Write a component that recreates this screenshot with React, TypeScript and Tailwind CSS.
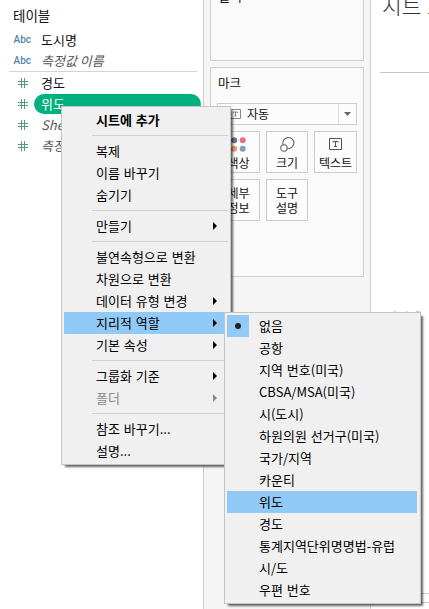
import type { ReactNode } from "react";

type Item = { label: string; arrow?: boolean; bold?: boolean; disabled?: boolean; active?: boolean; checked?: boolean } | null;

const contextMenu: Item[] = [
  { label: "시트에 추가", bold: true },
  null,
  { label: "복제" },
  { label: "이름 바꾸기" },
  { label: "숨기기" },
  null,
  { label: "만들기", arrow: true },
  null,
  { label: "불연속형으로 변환" },
  { label: "차원으로 변환" },
  { label: "데이터 유형 변경", arrow: true },
  { label: "지리적 역할", arrow: true, active: true },
  { label: "기본 속성", arrow: true },
  null,
  { label: "그룹화 기준", arrow: true },
  { label: "폴더", arrow: true, disabled: true },
  null,
  { label: "참조 바꾸기..." },
  { label: "설명..." },
];

const roleMenu: Item[] = [
  { label: "없음", checked: true },
  { label: "공항" },
  { label: "지역 번호(미국)" },
  { label: "CBSA/MSA(미국)" },
  { label: "시(도시)" },
  { label: "하원의원 선거구(미국)" },
  { label: "국가/지역" },
  { label: "카운티" },
  { label: "위도", active: true },
  { label: "경도" },
  { label: "통계지역단위명명법-유럽" },
  { label: "시/도" },
  { label: "우편 번호" },
];

function Menu({ items, className }: { items: Item[]; className: string }) {
  return (
    <div className={`absolute border border-[#c4c4c4] bg-[#f0f0f0] py-[2px] pl-[2px] text-[13px] text-black shadow-[3px_3px_2px_-1px_rgba(0,0,0,0.6)] [word-spacing:1px] ${className}`}>
      {items.map((item, i) =>
        item === null ? (
          <div key={i} className="flex h-[9px] items-center pl-7">
            <div className="h-px w-full bg-[#d2d2d2]" />
          </div>
        ) : (
          <div
            key={i}
            className={`flex h-[22px] items-center whitespace-nowrap ${item.active ? "bg-[#91c9f7]" : ""} ${item.disabled ? "text-[#8a8a8a]" : ""} ${item.bold ? "font-bold" : ""}`}
          >
            <div className={`mr-[10px] flex size-[22px] shrink-0 items-center justify-center ${item.checked ? "bg-[#91c9f7]" : ""}`}>
              {item.checked && <span className="size-[6px] rounded-full bg-[#222]" />}
            </div>
            <span className="grow leading-[22px]">{item.label}</span>
            {item.arrow && (
              <svg width="4" height="8" viewBox="0 0 4 8" className="mr-[11px]" fill="currentColor">
                <path d="M0 0 4 4 0 8Z" />
              </svg>
            )}
          </div>
        )
      )}
    </div>
  );
}

function Hash() {
  return (
    <svg width="10" height="10" viewBox="0 0 10 10" fill="none" stroke="#4f9b83" strokeWidth="1">
      <path d="M3.5 0V10M6.5 0V10M0 3.5H10M0 6.5H10" />
    </svg>
  );
}

function Field({ kind, label, italic, selected, className }: { kind: "abc" | "num"; label: string; italic?: boolean; selected?: boolean; className: string }) {
  return (
    <div className={`flex items-center ${className}`}>
      <div className="flex w-[34px] shrink-0 justify-end">
        {kind === "abc" ? (
          <span className="mr-[3px] font-['Roboto',sans-serif] text-[10px] font-medium leading-4 text-[#5586aa]">Abc</span>
        ) : (
          <span className="mr-[6px]"><Hash /></span>
        )}
      </div>
      <div
        className={`flex h-5 grow items-center whitespace-nowrap pl-[7px] text-[13px] leading-5 ${selected ? "rounded-full bg-[#00b180] text-white" : ""} ${italic ? "italic text-[#555]" : ""}`}
      >
        {label}
      </div>
    </div>
  );
}

function MarkButton({ icon, label }: { icon?: ReactNode; label: string }) {
  return (
    <div className="flex h-[42px] flex-col items-center justify-end border border-[#cdcdcd] bg-[#fcfcfc] text-xs leading-[15px] text-[#111]">
      {icon}
      <span className={`whitespace-pre text-center ${icon ? "mt-[3px] mb-[2px]" : "mb-[5px]"}`}>{label}</span>
    </div>
  );
}

export default function App() {
  return (
    <div className="relative flex h-[609px] w-[429px] overflow-hidden bg-white font-['Noto_Sans_CJK_KR',sans-serif] text-[#111]">
      <aside className="h-full w-[204px] shrink-0 border-r border-[#cfcfcf] pr-[2px]">
        <div className="h-[29px] pl-[13px] pt-[5px] text-[13.5px] leading-5">테이블</div>
        <Field kind="abc" label="도시명" className="h-[21px]" />
        <Field kind="abc" label="측정값 이름" italic className="h-[21px]" />
        <div className="ml-[9px] mr-1 h-px bg-[#d4d4d4]" />
        <Field kind="num" label="경도" className="h-[21px]" />
        <Field kind="num" label="위도" selected className="h-[21px]" />
        <Field kind="num" label="She" italic className="h-[21px]" />
        <Field kind="num" label="측정" italic className="h-[21px]" />
      </aside>

      <section className="flex h-full w-[167px] shrink-0 flex-col border-r border-[#cfcfcf] bg-[#f5f5f5] pl-[6px] pr-[6px]">
        <div className="h-[61px] border border-t-0 border-[#cfcfcf] bg-[#fafafa] pl-[7px]">
          <div className="mt-[-14px] text-[13px] leading-5">필터</div>
        </div>
        <div className="mt-[6px] h-[210px] border border-[#cfcfcf] bg-[#fafafa] pl-[6px] pr-[6px] pt-[5px]">
          <div className="pl-px text-[12.5px] leading-5">마크</div>
          <div className="mt-[10px] flex h-[22px] items-center border border-[#cdcdcd] bg-[#fcfcfc]">
            <svg width="11" height="10" viewBox="0 0 11 10" className="ml-3 shrink-0" fill="none" stroke="#888">
              <path d="M.5 .5H10.5V9.5H.5ZM3.5 4V3H7.5V4M5.5 3V7M4.5 7H6.5" />
            </svg>
            <span className="ml-[6px] grow text-xs leading-5">자동</span>
            <div className="flex h-full w-[18px] items-center justify-center border-l border-[#dedede]">
              <svg width="7" height="4" viewBox="0 0 7 4" fill="#666"><path d="M0 0H7L3.5 4Z" /></svg>
            </div>
          </div>
          <div className="mt-[6px] grid grid-cols-[43px_42px_43px] gap-[6px]">
            <MarkButton
              label="색상"
              icon={
                <svg width="15" height="15" viewBox="0 0 15 15" className="shrink-0">
                  <circle cx="3.2" cy="3.2" r="3" fill="#79698a" />
                  <circle cx="11.7" cy="3.2" r="3" fill="#e76f83" />
                  <circle cx="3.2" cy="11.7" r="3" fill="#e59a6a" />
                  <circle cx="11.7" cy="11.7" r="3" fill="#7e9fc4" />
                </svg>
              }
            />
            <MarkButton
              label="크기"
              icon={
                <svg width="15" height="15" viewBox="0 0 15 15" className="shrink-0" fill="none" stroke="#666" strokeWidth="1.1">
                  <path d="M3.2 7.8A5.5 5.5 0 1 1 7.2 11.4" />
                  <circle cx="3.9" cy="11" r="3.2" />
                </svg>
              }
            />
            <MarkButton
              label="텍스트"
              icon={
                <svg width="13" height="15" viewBox="0 0 13 15" className="shrink-0" fill="none" stroke="#555">
                  <path d="M.5 1.5H12.5V12.5H.5ZM4 5.5V4.5H9V5.5M6.5 4.5V10M5 9.5H8" />
                </svg>
              }
            />
            <MarkButton label={"세부\n정보"} />
            <MarkButton label={"도구\n설명"} />
          </div>
        </div>
      </section>

      <main className="flex min-w-0 grow flex-col pl-[9px]">
        <div className="h-[72px] overflow-hidden whitespace-nowrap pl-[2px]">
          <div className="mt-[-10px] text-[21.5px] font-light leading-[30px] text-[#333]">시트 1</div>
        </div>
        <div className="h-px bg-[#c4c4c4]" />
        <div className="mt-[234px] pl-[5px] text-[13px] leading-5 text-[#888]">여기에</div>
        <div className="mt-[266px] h-[10px] border-y border-[#d0d0d0]" />
      </main>

      <Menu items={contextMenu} className="left-[61px] top-[106px] h-[359px] w-[170px] pr-[2px]" />
      <Menu items={roleMenu} className="left-[224px] top-[312px] h-[292px] w-[197px] pr-[3px]" />
    </div>
  );
}
